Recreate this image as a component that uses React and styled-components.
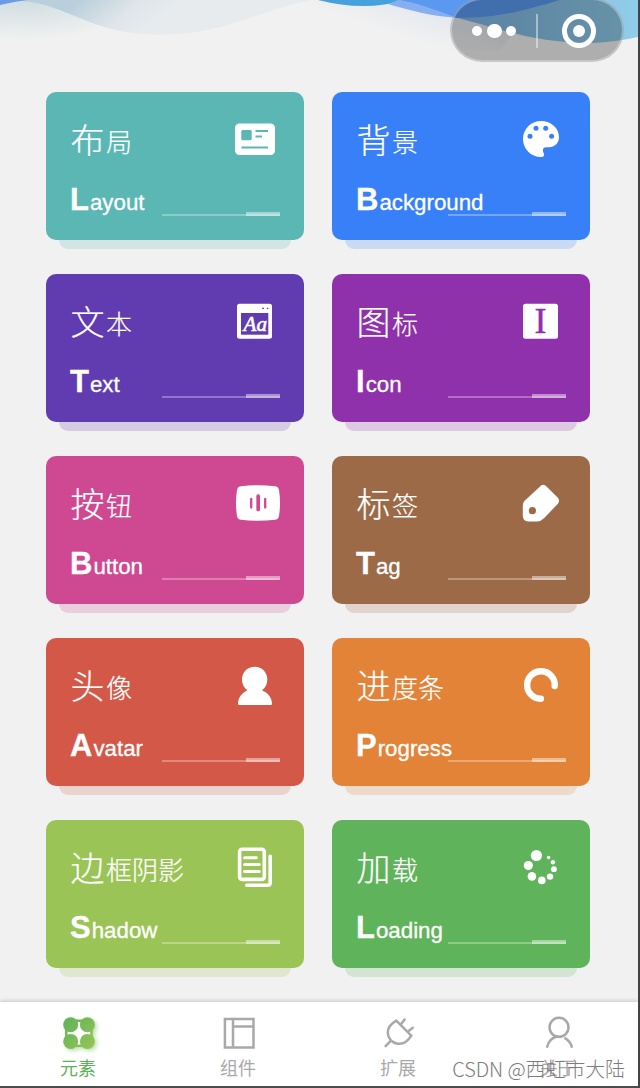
import React from 'react';
import styled, { createGlobalStyle } from 'styled-components';

const GlobalStyle = createGlobalStyle`
  * {
    box-sizing: border-box;
  }
  body {
    margin: 0;
    overflow: hidden;
    font-family: 'Liberation Sans', 'Noto Sans CJK SC', sans-serif;
  }
`;

const Page = styled.div`
  position: relative;
  display: flex;
  flex-direction: column;
  width: 640px;
  height: 1088px;
  background-color: #f1f1f1;
  border-right: 2px solid #434345;
  border-bottom: 2px solid #4c4c4e;
  overflow: hidden;
`;

const Header = styled.header`
  position: relative;
  flex: none;
  height: 92px;
`;

const Waves = styled.svg`
  display: block;
`;

const Capsule = styled.div`
  position: absolute;
  top: -2px;
  right: 14px;
  display: flex;
  align-items: center;
  width: 174px;
  height: 64px;
  padding: 2px 26px 0 20px;
  border: 2px solid rgba(255, 255, 255, 0.3);
  border-radius: 32px;
  background-color: rgba(0, 0, 0, 0.28);
`;

const Dot = styled.span`
  width: ${(props) => props.$size}px;
  height: ${(props) => props.$size}px;
  margin-right: ${(props) => props.$gap || 0}px;
  border-radius: 50%;
  background-color: white;
`;

const Divider = styled.span`
  width: 2px;
  height: 34px;
  margin-left: 20px;
  background-color: rgba(255, 255, 255, 0.45);
`;

const CloseRing = styled.span`
  display: flex;
  align-items: center;
  justify-content: center;
  width: 34px;
  height: 34px;
  margin-left: auto;
  border: 5px solid white;
  border-radius: 50%;
`;

const CardGrid = styled.main`
  flex: 1;
  display: grid;
  grid-template-columns: 258px 258px;
  grid-auto-rows: 148px;
  gap: 34px 28px;
  padding-left: 46px;
`;

const Card = styled.section`
  position: relative;
  padding: 23px 22px 0 24px;
  border-radius: 10px;
  background-color: ${(props) => props.$color};
  color: white;

  &::after {
    content: '';
    position: absolute;
    left: 13px;
    right: 13px;
    bottom: -9px;
    height: 9px;
    border-radius: 0 0 9px 9px;
    background-color: ${(props) => props.$color};
    opacity: 0.2;
  }
`;

const CardTop = styled.div`
  display: flex;
  justify-content: space-between;
  height: 62px;
`;

const Title = styled.h2`
  margin: 0;
  font-family: 'Noto Sans CJK SC', sans-serif;
  font-size: 26px;
  font-weight: 300;
  line-height: 48px;
  white-space: nowrap;
  -webkit-text-stroke: 0.2px white;

  &::first-letter {
    margin-left: 0.5px;
    margin-right: 1.5px;
    font-size: 34px;
    vertical-align: -1px;
  }
`;

const IconBox = styled.svg`
  flex: none;
  width: 48px;
  height: 48px;
`;

const Name = styled.div`
  position: relative;
  z-index: 1;
  font-size: 22.3px;
  line-height: 46px;
  -webkit-text-stroke: 0.3px white;

  &::first-letter {
    margin-right: 1px;
    font-size: 31px;
    font-weight: 700;
  }
`;

const Rule = styled.div`
  position: absolute;
  right: 24px;
  bottom: 24px;
  width: 118px;
  height: 2px;
  background-color: rgba(255, 255, 255, 0.3);

  &::after {
    content: '';
    position: absolute;
    right: 0;
    bottom: 0;
    width: 34px;
    height: 4px;
    background-color: rgba(255, 255, 255, 0.45);
  }
`;

const TabBar = styled.nav`
  position: relative;
  flex: none;
  display: flex;
  height: 84px;
  background-color: white;
  box-shadow: 0 -1px 4px rgba(0, 0, 0, 0.18);
`;

const Tab = styled.div`
  flex: none;
  display: flex;
  flex-direction: column;
  align-items: center;
  width: 160px;
  padding-top: 13px;
  color: ${(props) => (props.$active ? '#5cb257' : '#a9a9a9')};

  &:first-child {
    margin-left: -2px;
  }
`;

const TabIcon = styled.svg`
  width: 36px;
  height: 36px;
  overflow: visible;
  fill: none;
  stroke: currentColor;
  stroke-width: 2.5;
  stroke-linecap: round;
  filter: ${(props) => (props.$active ? 'drop-shadow(2px 2px 2px rgba(120, 190, 90, 0.5))' : 'none')};
`;

const TabLabel = styled.span`
  margin-top: 3px;
  font-family: 'Noto Sans CJK SC', sans-serif;
  font-size: 18px;
  line-height: 26px;
`;

const Watermark = styled.div`
  position: absolute;
  right: 13px;
  bottom: 2px;
  font-family: 'Noto Sans CJK SC', sans-serif;
  font-size: 20px;
  font-weight: 300;
  line-height: 30px;
  letter-spacing: -0.1px;
  color: #7c7c7c;
  white-space: nowrap;
`;

const cards = [
  {
    title: '布局',
    name: 'Layout',
    color: '#5ab7b3',
    icon: (c) => (
      <>
        <rect x="1" y="8.5" width="40" height="31.5" rx="4.5" />
        <rect x="7.3" y="15" width="10.4" height="10.2" rx="1.5" fill={c} />
        <path d="M21.5 16H34M21.5 21.6H28M7.5 32.5H34" stroke={c} strokeWidth="2" />
      </>
    ),
  },
  {
    title: '背景',
    name: 'Background',
    color: '#3880f8',
    icon: (c) => (
      <>
        <path d="M21 6C11 6 3 14 3 24S11 42 21 42C23.5 42 24.5 41 24 39C23.5 37.5 22.5 36 23 34.5C23.3 33 24.5 32.3 26 32.3H29C34.5 32.3 39 28 39 22C39 13 31 6 21 6Z" />
        <g fill={c}>
          <circle cx="10" cy="21.3" r="2.5" />
          <circle cx="16" cy="13.3" r="2.5" />
          <circle cx="25.7" cy="13.3" r="2.5" />
          <circle cx="31.6" cy="21.3" r="2.5" />
        </g>
      </>
    ),
  },
  {
    title: '文本',
    name: 'Text',
    color: '#613cb0',
    icon: (c) => (
      <>
        <rect x="3" y="6.7" width="35" height="35" rx="2.5" />
        <rect x="7" y="16" width="27.3" height="21.7" fill={c} />
        <path d="M28.2 11.3H30M32.8 11.3H34.2" stroke={c} strokeWidth="1.2" />
        <text
          x="9.5"
          y="33.7"
          stroke="white"
          strokeWidth="0.6"
          fontFamily="Liberation Serif, serif"
          fontStyle="italic"
          fontSize="20.5"
          textLength="23.5"
          lengthAdjust="spacingAndGlyphs"
        >
          Aa
        </text>
      </>
    ),
  },
  {
    title: '图标',
    name: 'Icon',
    color: '#8f31aa',
    icon: (c) => (
      <>
        <rect x="3" y="6.7" width="35" height="35" rx="2.5" />
        <text x="20.6" y="36" textAnchor="middle" fill={c} stroke={c} strokeWidth="0.4" fontFamily="Liberation Serif, serif" fontSize="36">
          I
        </text>
      </>
    ),
  },
  {
    title: '按钮',
    name: 'Button',
    color: '#cf4892',
    icon: (c) => (
      <>
        <path d="M7 7.3Q24 5.3 41 7.3Q44.3 7.6 45 11Q47 24 45 37Q44.3 40.4 41 40.8Q24 42.8 7 40.8Q3.7 40.4 3 37Q1 24 3 11Q3.7 7.6 7 7.3Z" />
        <g stroke={c} strokeLinecap="round">
          <path d="M17.2 19.8V28.6M31.2 19.8V28.6" strokeWidth="2.3" />
          <path d="M24.2 17.2V30.5" strokeWidth="3.7" />
        </g>
      </>
    ),
  },
  {
    title: '标签',
    name: 'Tag',
    color: '#9c6a47',
    icon: (c) => (
      <>
        <path d="M19.5 8Q23.3 3.6 27 8L37.4 18.3Q40.8 21.8 37.4 25.3L24 39.2Q20.8 42.4 17 42.4H8.5Q2.8 42.4 2.8 36.5V26.5Q2.8 23.7 4.7 21.7Z" />
        <circle cx="12.4" cy="31.7" r="3.6" fill={c} />
      </>
    ),
  },
  {
    title: '头像',
    name: 'Avatar',
    color: '#d35848',
    icon: () => (
      <path d="M20.7 5.7C27.8 5.7 33.3 11 33.3 18.5C33.3 23 31.4 26.8 28 29.2C34.5 32 38 37 38 42.8Q38 44 36.8 44H5.2Q4 44 4 42.8C4 37 7.5 32 13.4 29.2C10 26.8 8 23 8 18.5C8 11 13.6 5.7 20.7 5.7Z" />
    ),
  },
  {
    title: '进度条',
    name: 'Progress',
    color: '#e38338',
    icon: () => (
      <path d="M34.7 25A13.8 13.8 0 1 0 20.8 37.8" fill="none" stroke="white" strokeWidth="6.4" strokeLinecap="round" />
    ),
  },
  {
    title: '边框阴影',
    name: 'Shadow',
    color: '#9bc456',
    icon: () => (
      <g fill="none" stroke="white" strokeWidth="3.6" strokeLinecap="round">
        <rect x="5.6" y="6.2" width="24.7" height="30.2" rx="2.5" />
        <path d="M10.6 14.7H22.4M10.6 21.5H25.3M10.6 28.4H25.3" strokeWidth="3" />
        <path d="M36.2 13.4V39.5Q36.2 42.2 33.5 42.2H12.7" />
      </g>
    ),
  },
  {
    title: '加载',
    name: 'Loading',
    color: '#5fb35a',
    icon: () => (
      <>
        <circle cx="16.4" cy="12.5" r="5.6" />
        <circle cx="8.3" cy="22.5" r="4.6" />
        <circle cx="11.9" cy="33.4" r="4.3" />
        <circle cx="21.8" cy="37.4" r="3.8" />
        <circle cx="30" cy="33.6" r="3.2" />
        <circle cx="33.9" cy="26.2" r="2.9" />
        <circle cx="32.9" cy="19.2" r="2.2" />
        <circle cx="28.6" cy="14.5" r="1.8" />
      </>
    ),
  },
];

const tabs = [
  {
    label: '元素',
    active: true,
    icon: (
      <>
        <defs>
          <linearGradient id="leaf" gradientUnits="userSpaceOnUse" x1="4" y1="3" x2="34" y2="33">
            <stop offset="0" stopColor="#5fb35a" />
            <stop offset="1" stopColor="#96c455" />
          </linearGradient>
        </defs>
        <rect x="6.3" y="5.8" width="25.2" height="25" fill="white" stroke="url(#leaf)" />
        <g fill="url(#leaf)" stroke="none">
          <circle cx="10.7" cy="9.7" r="7.5" />
          <circle cx="27.4" cy="9.7" r="7.5" />
          <circle cx="10.7" cy="26.4" r="7.5" />
          <circle cx="27.4" cy="26.4" r="7.5" />
        </g>
      </>
    ),
  },
  {
    label: '组件',
    icon: <path d="M4.9 3.9H33.5V32.6H4.9ZM13 3.9V32.6M13 11.5H33.5" />,
  },
  {
    label: '扩展',
    icon: (
      <path d="M16.3 5.7L31.3 20.7C27.5 27 22.5 29.5 17.5 28.7C12 27.8 8 23.5 7.8 18C7.7 13 10.5 9 16.3 5.7ZM20.8 9.5L24.6 4.6M28 16.5L32.8 12.8M11 25.7L5.6 31.2" />
    ),
  },
  {
    label: '关于',
    icon: (
      <>
        <circle cx="19" cy="12.3" r="9.5" />
        <path d="M7.2 31.7C8.5 26.3 12 22.7 17 21.5M25.3 23.4C28.6 25.3 30.8 28.2 31.7 31.7" />
      </>
    ),
  },
];

function HeaderWaves() {
  return (
    <Waves width="638" height="60" viewBox="0 0 638 60">
      <defs>
        <radialGradient id="mist" gradientUnits="userSpaceOnUse" cx="0" cy="0" r="1" gradientTransform="translate(24 0) scale(120 40)">
          <stop offset="0" stopColor="#cfdde1" />
          <stop offset="1" stopColor="#f1f1f1" />
        </radialGradient>
        <linearGradient id="pale" gradientUnits="userSpaceOnUse" x1="80" y1="0" x2="120" y2="50">
          <stop offset="0" stopColor="#bacfdc" />
          <stop offset="0.6" stopColor="#dfe5ea" />
          <stop offset="1" stopColor="#e7ebee" />
        </linearGradient>
        <linearGradient id="haze" gradientUnits="userSpaceOnUse" x1="420" y1="0" x2="408" y2="38">
          <stop offset="0" stopColor="#e1e7ee" />
          <stop offset="1" stopColor="#f1f1f1" />
        </linearGradient>
        <linearGradient id="sky" x1="0" y1="0" x2="1" y2="0">
          <stop offset="0" stopColor="#7fb4e4" />
          <stop offset="1" stopColor="#90cde8" />
        </linearGradient>
      </defs>
      <path d="M0 0H144V42H0Z" fill="url(#mist)" />
      <path d="M22 1C70 5 90 34.7 162 34.7C225 34.7 265 8 312 0H22Z" fill="url(#pale)" />
      <path d="M312 0V50H500L540 0Z" fill="url(#haze)" />
      <path d="M0 0H27Q12 2 0 5Z" fill="#6a9be8" />
      <path d="M318 0Q365 12 405 0Z" fill="#46a0dc" />
      <path d="M388 4C420 13 440 18 468 18L500 0H398Z" fill="#86aef0" />
      <path d="M450 16C500 28 530 43 592 43Q616 42 638 37V0H450Z" fill="url(#sky)" />
      <path d="M400 0C425 5 440 12 458 18C500 18 525 10 560 0Z" fill="#5b99f0" />
    </Waves>
  );
}

function ElementCard({ title, name, color, icon }) {
  return (
    <Card $color={color}>
      <CardTop>
        <Title>{title}</Title>
        <IconBox viewBox="0 0 48 48" fill="white">
          {icon(color)}
        </IconBox>
      </CardTop>
      <Name>{name}</Name>
      <Rule />
    </Card>
  );
}

function App() {
  return (
    <Page>
      <GlobalStyle />
      <Header>
        <HeaderWaves />
        <Capsule>
          <Dot $size={10} $gap={5} />
          <Dot $size={14.5} $gap={4.5} />
          <Dot $size={10} />
          <Divider />
          <CloseRing>
            <Dot $size={12} />
          </CloseRing>
        </Capsule>
      </Header>
      <CardGrid>
        {cards.map((card) => (
          <ElementCard key={card.title} {...card} />
        ))}
      </CardGrid>
      <TabBar>
        {tabs.map((tab) => (
          <Tab key={tab.label} $active={tab.active}>
            <TabIcon viewBox="0 0 36 36" $active={tab.active}>
              {tab.icon}
            </TabIcon>
            <TabLabel>{tab.label}</TabLabel>
          </Tab>
        ))}
        <Watermark>CSDN @西虹市大陆</Watermark>
      </TabBar>
    </Page>
  );
}

export default App;
